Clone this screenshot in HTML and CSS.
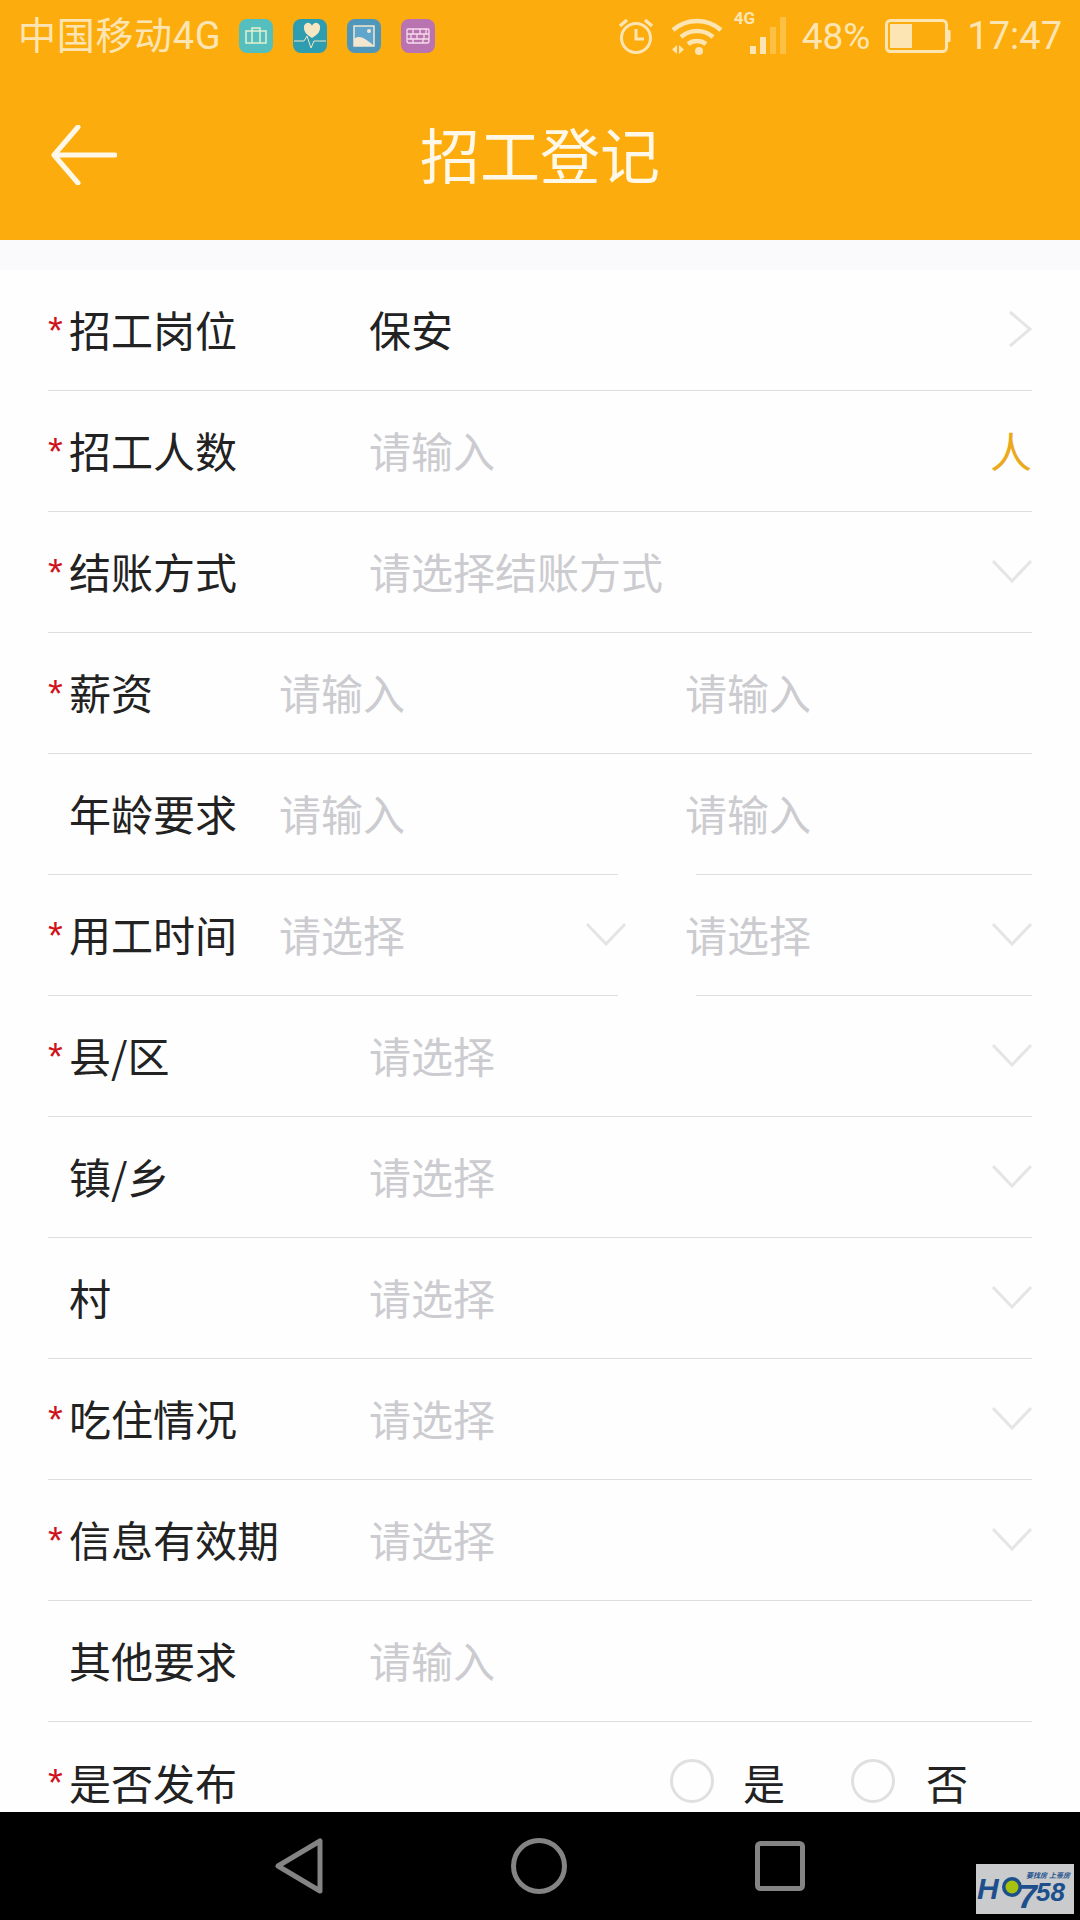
FILE: index.html
```html
<!DOCTYPE html>
<html lang="zh-CN">
<head>
  <meta charset="UTF-8">
  <title>招工登记</title>
  <link rel="stylesheet" href="styles.css">
</head>
<body>
  <div class="screen">
    <header class="head">
      <div class="status">
        <span class="carrier">中国移动4G</span>
        <div class="notices">
          <svg class="notice" viewBox="0 0 34 34"><rect width="34" height="34" rx="8" fill="#55bfc0"/><path d="M7 12h20v12H7zM13 12V9h8v3M13 12v12M21 12v12" fill="none" stroke="#e3f0d0" stroke-width="1.5"/></svg>
          <svg class="notice" viewBox="0 0 34 34"><rect width="34" height="34" rx="8" fill="#2f9db0"/><path d="M19 19c-5-3-8-6-8-10a4 4 0 0 1 8-2 4 4 0 0 1 8 2c0 4-3 7-8 10z" fill="#f5e6c4"/><path d="M1 22h10l3-5 4 12 3-7h12" fill="none" stroke="#f5e6c4" stroke-width="1"/></svg>
          <svg class="notice" viewBox="0 0 34 34"><rect width="34" height="34" rx="8" fill="#4f96bb"/><rect x="7" y="7" width="20" height="20" fill="#5fa6cc" stroke="#f3e6cf" stroke-width="1.5"/><path d="M7 27v-7c5-4 10-2 20 7z" fill="#f3e6cf"/><circle cx="22" cy="12" r="2" fill="#f3e6cf"/></svg>
          <svg class="notice" viewBox="0 0 34 34"><rect width="34" height="34" rx="8" fill="#b873b0"/><path d="M7 10h20a1 1 0 0 1 1 1v11a2 2 0 0 1-2 2H8a2 2 0 0 1-2-2V11a1 1 0 0 1 1-1zM6 15h22M6 20h22M12 10v5M19 10v5M25 10v5M10 15v5M16 15v5M23 15v5M12 20v4M22 20v4" fill="none" stroke="#f8dcec" stroke-width="1.3"/></svg>
        </div>
        <div class="sys">
          <svg class="alarm" viewBox="0 0 36 38"><circle cx="18" cy="21" r="14.500" fill="none" stroke="currentColor" stroke-width="3"/><path d="M18 12v10h8" fill="none" stroke="currentColor" stroke-width="3"/><path d="M2 9l7-6M34 9l-7-6" stroke="currentColor" stroke-width="3.500"/></svg>
          <svg class="wifi" viewBox="0 0 54 38"><path d="M3 13c14-12 34-12 48 0" fill="none" stroke="currentColor" stroke-width="4.500"/><path d="M11 20c9-8 23-8 32 0" fill="none" stroke="currentColor" stroke-width="4.500"/><path d="M18 27c5-4 13-4 18 0" fill="none" stroke="currentColor" stroke-width="4.500"/><circle cx="29" cy="34" r="4" fill="currentColor"/><path d="M7 28v9l-5-4.500zM9 28v9l5-4.500z" fill="currentColor"/></svg>
          <div class="signal">
            <span class="net">4G</span>
            <svg class="bars" viewBox="0 0 44 38"><rect x="16" y="29" width="6" height="8" fill="currentColor"/><rect x="26" y="20" width="6" height="17" fill="currentColor"/><rect x="36" y="10" width="6" height="27" fill="currentColor" opacity=".35"/><rect x="46" y="0" width="6" height="37" fill="currentColor" opacity=".35"/></svg>
          </div>
          <span class="pct">48%</span>
          <svg class="batt" viewBox="0 0 66 34"><rect x="1.500" y="1.500" width="60" height="31" rx="4" fill="none" stroke="currentColor" stroke-width="3"/><rect x="5" y="5" width="22" height="24" fill="currentColor"/><path d="M63 11h1.500a1 1 0 0 1 1 1v10a1 1 0 0 1-1 1H63z" fill="currentColor"/></svg>
          <span class="clock">17:47</span>
        </div>
      </div>
      <div class="titlebar">
        <svg class="back" viewBox="0 0 66 60"><path d="M27 2L3 30l24 28M3 30h61" fill="none" stroke="#fff8e8" stroke-width="5" stroke-linecap="round" stroke-linejoin="round"/></svg>
        <h1 class="title">招工登记</h1>
      </div>
    </header>

    <main class="form">
      <div class="strip"></div>

      <div class="row">
        <span class="mark">*</span><span class="label">招工岗位</span>
        <span class="val filled">保安</span>
        <svg class="chev-r" viewBox="0 0 24 38"><path d="M2 2l20 17L2 36" /></svg>
      </div>
      <div class="row">
        <span class="mark">*</span><span class="label">招工人数</span>
        <span class="val">请输入</span>
        <span class="unit">人</span>
      </div>
      <div class="row">
        <span class="mark">*</span><span class="label">结账方式</span>
        <span class="val">请选择结账方式</span>
        <svg class="chev" viewBox="0 0 40 24"><path d="M1 2l19 20L39 2" /></svg>
      </div>
      <div class="row">
        <span class="mark">*</span><span class="label short">薪资</span>
        <span class="val wide">请输入</span>
        <span class="val">请输入</span>
      </div>
      <div class="row split">
        <div class="half left">
          <span class="mark"></span><span class="label short">年龄要求</span>
          <span class="val">请输入</span>
        </div>
        <div class="half right">
          <span class="val shift">请输入</span>
        </div>
      </div>
      <div class="row split">
        <div class="half left">
          <span class="mark">*</span><span class="label short">用工时间</span>
          <span class="val">请选择</span>
          <svg class="chev over" viewBox="0 0 40 24"><path d="M1 2l19 20L39 2" /></svg>
        </div>
        <div class="half right">
          <span class="val shift">请选择</span>
          <svg class="chev" viewBox="0 0 40 24"><path d="M1 2l19 20L39 2" /></svg>
        </div>
      </div>
      <div class="row">
        <span class="mark">*</span><span class="label">县/区</span>
        <span class="val">请选择</span>
        <svg class="chev" viewBox="0 0 40 24"><path d="M1 2l19 20L39 2" /></svg>
      </div>
      <div class="row">
        <span class="mark"></span><span class="label">镇/乡</span>
        <span class="val">请选择</span>
        <svg class="chev" viewBox="0 0 40 24"><path d="M1 2l19 20L39 2" /></svg>
      </div>
      <div class="row">
        <span class="mark"></span><span class="label">村</span>
        <span class="val">请选择</span>
        <svg class="chev" viewBox="0 0 40 24"><path d="M1 2l19 20L39 2" /></svg>
      </div>
      <div class="row">
        <span class="mark">*</span><span class="label">吃住情况</span>
        <span class="val">请选择</span>
        <svg class="chev" viewBox="0 0 40 24"><path d="M1 2l19 20L39 2" /></svg>
      </div>
      <div class="row">
        <span class="mark">*</span><span class="label">信息有效期</span>
        <span class="val">请选择</span>
        <svg class="chev" viewBox="0 0 40 24"><path d="M1 2l19 20L39 2" /></svg>
      </div>
      <div class="row">
        <span class="mark"></span><span class="label">其他要求</span>
        <span class="val">请输入</span>
      </div>
      <div class="row last">
        <span class="mark">*</span><span class="label">是否发布</span>
        <div class="radios">
          <span class="radio"></span><span class="opt">是</span>
          <span class="radio"></span><span class="opt">否</span>
        </div>
      </div>
    </main>

    <nav class="nav">
      <svg class="nav-back" viewBox="0 0 48 56"><path d="M45 3v50L3 28z" /></svg>
      <svg class="nav-home" viewBox="0 0 56 56"><circle cx="28" cy="28" r="25.500" /></svg>
      <svg class="nav-recent" viewBox="0 0 50 50"><rect x="2.500" y="2.500" width="45" height="45" rx="3" /></svg>
      <svg class="logo" viewBox="0 0 98 50">
        <rect width="98" height="50" fill="#c9cbcc"/>
        <text class="logo-tag" x="50" y="14">要找房 上豪房</text>
        <text class="logo-h" x="1" y="35">H</text>
        <circle cx="36" cy="23" r="10" fill="#1c4f8c"/>
        <circle cx="36" cy="23" r="6.500" fill="#a6c20e"/>
        <text class="logo-seven" x="42" y="44">7</text>
        <text class="logo-n" x="60" y="37">58</text>
      </svg>
    </nav>
  </div>
</body>
</html>
```

FILE: styles.css
```css
html, body {
  margin: 0;
  padding: 0;
}
body {
  font-family: "Noto Sans CJK SC", "Noto Sans", sans-serif;
  background: #fff;
}
.screen {
  width: 1080px;
  height: 1920px;
  display: flex;
  flex-direction: column;
  overflow: hidden;
}

/* top bar */
.head {
  height: 240px;
  flex: none;
  background: #fcac0c;
  display: flex;
  flex-direction: column;
}
.status {
  height: 72px;
  display: flex;
  align-items: center;
  padding: 0 18px;
  color: #fde5b3;
}
.carrier {
  font-size: 38px;
  line-height: 72px;
  white-space: nowrap;
  letter-spacing: 0.7px;
  font-family: "Roboto", "Noto Sans CJK SC", sans-serif;
}
.notices {
  display: flex;
  gap: 20px;
  margin-left: 18px;
}
.notice {
  width: 34px;
  height: 34px;
  display: block;
}
.sys {
  margin-left: auto;
  display: flex;
  align-items: center;
}
.alarm {
  width: 36px;
  height: 38px;
}
.wifi {
  width: 54px;
  height: 38px;
  margin-left: 16px;
}
.signal {
  position: relative;
  width: 58px;
  height: 38px;
  margin-left: 10px;
}
.net {
  position: absolute;
  left: 0;
  top: -9px;
  font: bold 17px "Roboto", sans-serif;
}
.bars {
  position: absolute;
  left: 0;
  top: 0;
  width: 44px;
  height: 38px;
  overflow: visible;
}
.pct {
  font: 37px "Roboto", sans-serif;
  margin-left: 10px;
}
.batt {
  width: 66px;
  height: 34px;
  margin-left: 15px;
}
.clock {
  font: 38px "Roboto", sans-serif;
  margin-left: 16px;
}
.titlebar {
  flex: 1;
  display: flex;
  align-items: center;
  justify-content: center;
  position: relative;
  padding-bottom: 6px;
}
.back {
  position: absolute;
  left: 51px;
  top: 53px;
  width: 66px;
  height: 60px;
}
.title {
  margin: 0;
  font-size: 60px;
  font-weight: 400;
  color: #fff8e8;
  line-height: 1;
}

/* form */
.form {
  flex: 1;
  min-height: 0;
  overflow: hidden;
  background: #fefefe;
}
.strip {
  height: 30px;
  background: #fafafc;
}
.row {
  height: 121px;
  box-sizing: border-box;
  margin: 0 48px;
  padding-bottom: 3px;
  display: flex;
  align-items: center;
  border-bottom: 1px solid #dedee2;
  font-size: 42px;
  color: #222;
}
.row.split {
  border-bottom: 0;
  padding-bottom: 0;
  justify-content: space-between;
}
.row.last {
  border-bottom: 0;
}
.half {
  height: 100%;
  box-sizing: border-box;
  padding-bottom: 3px;
  display: flex;
  align-items: center;
  border-bottom: 1px solid #dedee2;
}
.half.left {
  width: 570px;
}
.half.right {
  width: 336px;
}
.mark {
  width: 21px;
  flex: none;
  color: #d0121b;
  font: 38px/1 "Liberation Sans", sans-serif;
  position: relative;
  top: 2px;
}
.label {
  width: 300px;
  flex: none;
  white-space: nowrap;
}
.label.short {
  width: 210px;
}
.val {
  color: #cbcbd0;
  white-space: nowrap;
}
.val.filled {
  color: #222;
}
.val.wide {
  width: 406px;
  flex: none;
}
.val.shift {
  margin-left: -11px;
}
.unit {
  margin-left: auto;
  color: #eba91c;
}
.chev, .chev-r {
  margin-left: auto;
  fill: none;
  stroke: #e5e5e8;
  stroke-width: 3;
}
.chev {
  width: 40px;
  height: 24px;
}
.chev.over {
  margin-right: -8px;
}
.chev-r {
  width: 24px;
  height: 38px;
}
.radios {
  margin-left: auto;
  margin-right: 64px;
  display: flex;
  align-items: center;
}
.radio {
  width: 44px;
  height: 44px;
  box-sizing: border-box;
  border: 3px solid #e0e0e2;
  border-radius: 50%;
}
.opt {
  margin: 0 0 0 29px;
}
.opt:nth-child(2) {
  margin-right: 66px;
}
.opt:nth-child(4) {
  margin-left: 31px;
}

/* android nav */
.nav {
  height: 108px;
  flex: none;
  background: #000;
  position: relative;
  display: flex;
  align-items: center;
  justify-content: center;
  gap: 188px;
  box-sizing: border-box;
}
.nav svg {
  fill: none;
  stroke: #848484;
  stroke-width: 5;
  stroke-linejoin: round;
}
.nav-back {
  width: 48px;
  height: 56px;
}
.nav-home {
  width: 56px;
  height: 56px;
}
.nav-recent {
  width: 50px;
  height: 50px;
}
.nav svg.logo {
  position: absolute;
  right: 6px;
  bottom: 6px;
  width: 98px;
  height: 50px;
  stroke: none;
}
.logo text {
  font-family: "Liberation Sans", "Noto Sans CJK SC", sans-serif;
  font-style: italic;
  font-weight: bold;
  fill: #1c4f8c;
}
.logo-tag {
  font-size: 7px;
}
.logo-h {
  font-size: 30px;
}
.logo-seven {
  font-size: 34px;
}
.logo-n {
  font-size: 26px;
}
```
